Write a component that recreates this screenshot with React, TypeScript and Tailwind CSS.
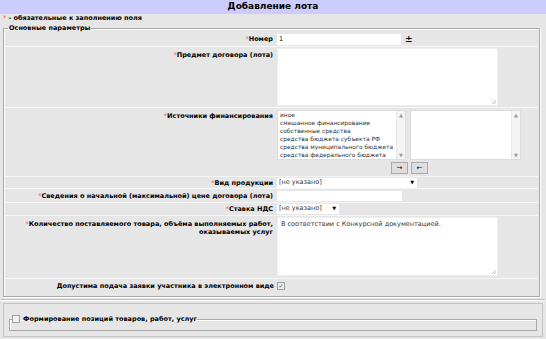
import React from "react";

const Req = () => <span className="text-[#ff3b3b] font-normal">*</span>;

interface RowProps {
    label: React.ReactNode;
    required?: boolean;
    top?: boolean;
    h: string;
    children: React.ReactNode;
}

const Row = ({ label, required = true, top = false, h, children }: RowProps) => (
    <div className={`flex border-b border-[#f6f6f6] ${h} ${top ? "items-start" : "items-center"}`}>
        <div className={`w-[269px] shrink-0 pr-[1px] text-right font-bold leading-[8px] ${top ? "pt-[4px]" : ""}`}>
            {required && <Req />}
            {label}
        </div>
        <div className={`ml-[3px] flex-1 ${top ? "pt-[1px]" : ""}`}>{children}</div>
    </div>
);

const ScrollBar = () => (
    <div className="flex w-[9px] shrink-0 flex-col justify-between border-l border-[#e8e8e8] bg-[#f4f4f4] text-[5px] leading-[8px] text-[#9a9a9a] text-center">
        <span>▲</span>
        <span>▼</span>
    </div>
);

const Select = ({ w, value }: { w: string; value: string }) => (
    <div className={`flex h-[10px] items-center justify-between bg-white pl-[2px] pr-[3px] text-[#333] ${w}`}>
        <span>{value}</span>
        <span className="text-[5px] text-black">▼</span>
    </div>
);

const Resize = () => (
    <svg className="absolute bottom-[1px] right-[1px]" width="5" height="5" viewBox="0 0 5 5">
        <path d="M5 1L1 5M5 3L3 5" stroke="#bbb" strokeWidth="0.8" />
    </svg>
);

const sources = [
    "иное",
    "смешанное финансирование",
    "собственные средства",
    "средства бюджета субъекта РФ",
    "средства муниципального бюджета",
    "средства федерального бюджета",
];

export default function App() {
    return (
        <div className="h-[339px] w-[546px] bg-[#e6e6e6] text-[6.5px] text-black font-['DejaVu_Sans',sans-serif] overflow-hidden">
            <div className="flex h-[14px] items-center justify-center bg-[#ccccff] text-[9px] font-bold">
                Добавление лота
            </div>
            <div className="flex h-[10px] items-center pl-[3px] font-bold">
                <Req />&nbsp;- обязательные к заполнению поля
            </div>
            <fieldset className="mx-[3px] mr-[6px] border border-[#a9a9a9] shadow-[inset_1px_1px_0_#fff,1px_1px_0_#fff] px-[1px] pb-[4px]">
                <legend className="ml-[3px] px-[1px] font-bold leading-[8px]">Основные параметры</legend>

                <Row label="Номер" h="h-[15px]">
                    <div className="flex items-center">
                        <div className="h-[11px] w-[124px] bg-white pl-[2px] leading-[11px]">1</div>
                        <span className="ml-[4px] text-[9px] font-bold leading-[9px]">±</span>
                    </div>
                </Row>

                <Row label="Предмет договора (лота)" h="h-[61px]" top>
                    <div className="relative h-[58px] w-[221px] bg-white border border-[#eee]">
                        <Resize />
                    </div>
                </Row>

                <Row label="Источники финансирования" h="h-[69px]" top>
                    <div className="flex gap-[4px] pt-[1px]">
                        <div className="flex h-[50px] w-[129px] border border-[#ddd] bg-white">
                            <div className="min-w-0 flex-1 whitespace-nowrap pl-[2px] text-[5.9px] leading-[8px] text-[#333]">
                                {sources.map((s) => (
                                    <div key={s}>{s}</div>
                                ))}
                            </div>
                            <ScrollBar />
                        </div>
                        <div className="flex h-[50px] w-[111px] border border-[#ddd] bg-white">
                            <div className="flex-1" />
                            <ScrollBar />
                        </div>
                    </div>
                    <div className="mt-[2px] flex gap-[3px] pl-[114px]">
                        <div className="flex h-[12px] w-[17px] items-center justify-center border border-[#aaa] bg-[#dedede] text-[7px] leading-none">→</div>
                        <div className="flex h-[12px] w-[17px] items-center justify-center border border-[#aaa] bg-[#dedede] text-[7px] leading-none">←</div>
                    </div>
                </Row>

                <Row label="Вид продукции" h="h-[12px]">
                    <Select w="w-[140px]" value="[не указано]" />
                </Row>

                <Row label="Сведения о начальной (максимальной) цене договора (лота)" h="h-[14px]">
                    <div className="h-[10px] w-[125px] bg-white" />
                </Row>

                <Row label="Ставка НДС" h="h-[13px]">
                    <Select w="w-[62px]" value="[не указано]" />
                </Row>

                <Row
                    label={
                        <>
                            Количество поставляемого товара, объёма выполняемых работ,
                            <br />
                            оказываемых услуг
                        </>
                    }
                    h="h-[63px]"
                    top
                >
                    <div className="relative h-[59px] w-[221px] border border-[#eee] bg-white pl-[3px] pt-[2px] text-[#333]">
                        В соответствии с Конкурсной документацией.
                        <Resize />
                    </div>
                </Row>

                <div className="flex h-[13px] items-center">
                    <div className="w-[269px] shrink-0 text-right font-bold leading-[8px]">
                        Допустима подача заявки участника в электронном виде
                    </div>
                    <div className="ml-[3px] flex h-[8px] w-[8px] items-center justify-center border border-[#a0a0a0] bg-[#eaeaea] text-[6px] leading-none text-[#555]">
                        ✓
                    </div>
                </div>
            </fieldset>

            <div className="mt-[2px] mx-[1px] border-t border-[#bdbdbd] border-b border-b-white h-[2px]" />

            <div className="mx-[3px] mt-[2px] h-[34px] border border-[#c4c4c4] px-[5px] pt-[11px]">
                <fieldset className="h-[16px] border border-[#a9a9a9] shadow-[inset_1px_1px_0_#fff]">
                    <legend className="ml-[2px] flex items-center gap-[3px] font-bold leading-[8px]">
                        <span className="inline-block h-[8px] w-[8px] border border-[#a0a0a0] bg-[#f2f2f2]" />
                        Формирование позиций товаров, работ, услуг
                    </legend>
                </fieldset>
            </div>
        </div>
    );
}
